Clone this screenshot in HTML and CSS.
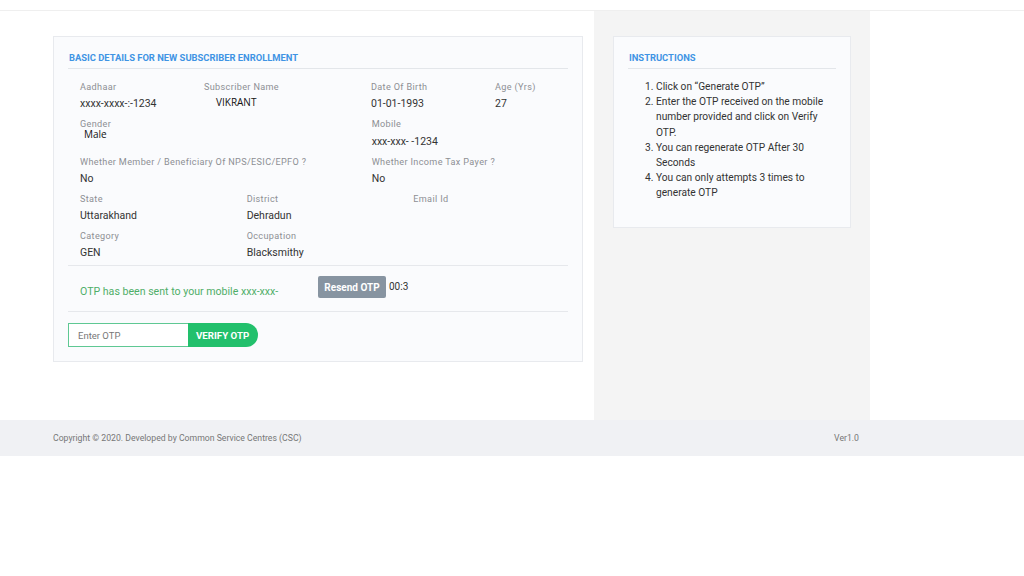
FILE: index.html
```html
<!DOCTYPE html>
<html lang="en">
<head>
<meta charset="utf-8">
<title>Subscriber Enrollment</title>
<link rel="stylesheet" href="styles.css">
</head>
<body>
<header class="topbar"></header>
<main class="main">
  <section class="left">
    <div class="card details">
      <h2 class="card-title">Basic Details for New Subscriber Enrollment</h2>
      <div class="fields">
        <div class="row">
          <div class="field c3"><div class="lbl">Aadhaar</div><div class="val">xxxx-xxxx-:-1234</div></div>
          <div class="field c4"><div class="lbl">Subscriber Name</div><div class="val name">VIKRANT</div></div>
          <div class="field c3"><div class="lbl">Date Of Birth</div><div class="val">01-01-1993</div></div>
          <div class="field c2"><div class="lbl">Age (Yrs)</div><div class="val">27</div></div>
        </div>
        <div class="row">
          <div class="field c7"><div class="lbl">Gender</div><div class="val male">Male</div></div>
          <div class="field c5"><div class="lbl">Mobile</div><div class="val mobile">xxx-xxx- -1234</div></div>
        </div>
        <div class="row">
          <div class="field c7"><div class="lbl">Whether Member / Beneficiary Of NPS/ESIC/EPFO ?</div><div class="val">No</div></div>
          <div class="field c5"><div class="lbl">Whether Income Tax Payer ?</div><div class="val">No</div></div>
        </div>
        <div class="row">
          <div class="field c4w"><div class="lbl">State</div><div class="val">Uttarakhand</div></div>
          <div class="field c4w"><div class="lbl">District</div><div class="val">Dehradun</div></div>
          <div class="field c4w"><div class="lbl">Email Id</div><div class="val"></div></div>
        </div>
        <div class="row last">
          <div class="field c4w"><div class="lbl">Category</div><div class="val">GEN</div></div>
          <div class="field c4w"><div class="lbl">Occupation</div><div class="val">Blacksmithy</div></div>
        </div>
      </div>
      <div class="otp-row">
        <div class="otp-msg">OTP has been sent to your mobile xxx-xxx-</div>
        <button class="resend" type="button">Resend OTP</button>
        <span class="timer">00:3</span>
      </div>
      <div class="verify">
        <input class="otp-input" type="text" placeholder="Enter OTP">
        <button class="verify-btn" type="button">VERIFY OTP</button>
      </div>
    </div>
  </section>
  <aside class="side">
    <div class="card instr">
      <h2 class="card-title">Instructions</h2>
      <ol class="steps">
        <li>Click on “Generate OTP”</li>
        <li>Enter the OTP received on the mobile number provided and click on Verify OTP.</li>
        <li>You can regenerate OTP After 30 Seconds</li>
        <li>You can only attempts 3 times to generate OTP</li>
      </ol>
    </div>
  </aside>
  <div class="rest"></div>
</main>
<footer class="footer">
  <span class="copy">Copyright © 2020. Developed by Common Service Centres (CSC)</span>
  <span class="ver">Ver1.0</span>
</footer>
</body>
</html>
```

FILE: styles.css
```css
* { box-sizing: border-box; }
html, body { margin: 0; padding: 0; background: #ffffff; }
body { font-family: Roboto, "Liberation Sans", sans-serif; color: #333; width: 1024px; }

.topbar { height: 11px; border-bottom: 1px solid #efefef; background: #fff; }

.main { display: flex; height: 409px; }
.left { width: 594px; padding: 25px 0 0 53px; }
.side { width: 276px; background: #f4f4f4; padding: 25px 19px 0 19px; }
.rest { flex: 1; }

.card {
  background: #fafbfd;
  border: 1px solid #e8eaee;
  padding: 15px 14px 0 14px;
}
.details { width: 530px; height: 326px; }
.instr { width: 238px; height: 192px; }

.card-title {
  margin: 0;
  font-size: 9.4px;
  line-height: 12px;
  font-weight: 700;
  color: #3f94e4;
  text-transform: uppercase;
  padding: 0 0 4px 1px;
  border-bottom: 1px solid #e3e6ea;
}

.fields { padding-top: 11px; border-bottom: 1px solid #e6e8ec; }
.row { display: flex; }
.row.last .field { margin-bottom: 3px; }
.field { padding-left: 12px; margin-bottom: 4px; }
.c2 { width: 16.66%; }
.c3 { width: 24.8%; }
.c4 { width: 33.4%; }
.c5 { width: 41.66%; }
.c7 { width: 58.34%; }
.c4w { width: 33.33%; }
.lbl { font-size: 9.1px; line-height: 15px; color: #8d8f94; letter-spacing: 0.35px; }
.val { font-size: 10.5px; line-height: 18px; height: 18px; color: #333; }
.val.name { padding-left: 12px; color: #111; font-family: "Open Sans", Roboto, sans-serif; font-size: 10px; margin-top: -2px; }
.val.male { padding-left: 4px; color: #111; font-family: "Open Sans", Roboto, sans-serif; font-size: 10px; margin-top: -7px; }
.val.mobile { margin-top: 1px; }

.otp-row {
  display: flex;
  align-items: flex-start;
  height: 46px;
  padding-top: 10px;
  border-bottom: 1px solid #e6e8ec;
}
.otp-msg { width: 250px; padding: 9px 0 0 12px; font-size: 10.6px; line-height: 14px; color: #4fae68; }
.resend {
  height: 22px; width: 68px; padding: 0;
  border: 0; border-radius: 2px;
  background: #8794a1; color: #fff;
  font-family: Roboto, sans-serif; font-size: 10px; font-weight: 700;
}
.timer { font-size: 10px; line-height: 22px; color: #333; margin-left: 3px; }

.verify { display: flex; padding-top: 11px; }
.otp-input {
  width: 120px; height: 24px; margin: 0;
  border: 1px solid #5ec893; border-right: 0;
  background: #fff; padding: 0 9px;
  font-family: Roboto, sans-serif; font-size: 9.5px; color: #333;
  outline: none;
}
.otp-input::placeholder { color: #777; }
.verify-btn {
  width: 70px; height: 24px; margin: 0;
  border: 0; border-radius: 0 12px 12px 0;
  background: #22c06c; color: #fff;
  font-family: Roboto, sans-serif; font-size: 9.7px; font-weight: 700;
  text-align: left; padding: 0 0 0 8px;
}

.steps {
  margin: 0; padding: 10px 0 0 28px;
  font-size: 10.2px; line-height: 15.2px; color: #333;
}

.footer {
  height: 36px; background: #f0f1f4;
  display: flex; align-items: center; justify-content: space-between;
  padding: 0 165px 0 53px;
  font-size: 8.7px; color: #777;
}
```
